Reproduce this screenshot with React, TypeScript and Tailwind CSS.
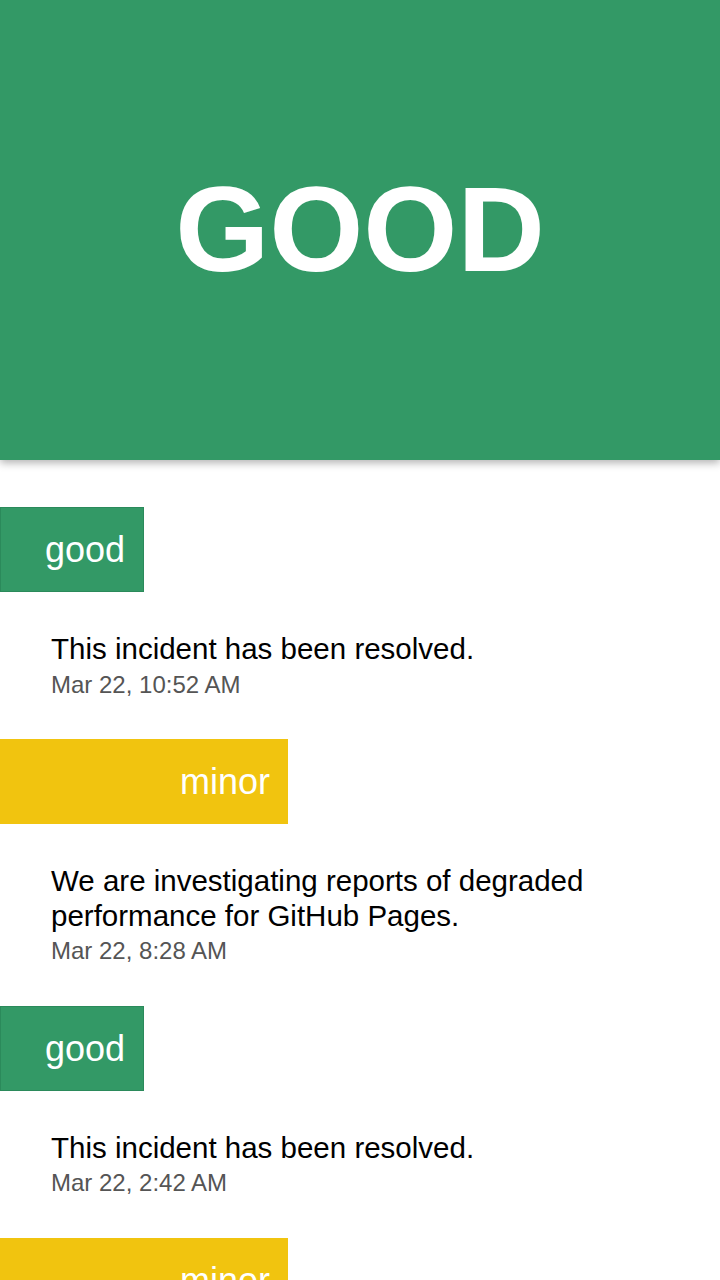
import React from "react";

type Status = "good" | "minor";

interface Incident {
  status: Status;
  body: string;
  date: string;
}

const incidents: Incident[] = [
  { status: "good", body: "This incident has been resolved.", date: "Mar 22, 10:52 AM" },
  {
    status: "minor",
    body: "We are investigating reports of degraded performance for GitHub Pages.",
    date: "Mar 22, 8:28 AM",
  },
  { status: "good", body: "This incident has been resolved.", date: "Mar 22, 2:42 AM" },
  {
    status: "minor",
    body: "We are investigating reports of degraded performance.",
    date: "Mar 22, 1:15 AM",
  },
];

const badgeClass: Record<Status, string> = {
  good: "w-[144px] bg-[#339966] border border-[#2b8a5b]",
  minor: "w-[288px] bg-[#f1c40f]",
};

const StatusBadge: React.FC<{ status: Status }> = ({ status }) => (
  <div
    className={`flex h-[85px] items-center justify-end pr-[18px] text-[36px] leading-[41px] text-white ${badgeClass[status]}`}
  >
    {status}
  </div>
);

const App: React.FC = () => {
  return (
    <div className="min-h-screen bg-white font-['Liberation_Sans',Arial,sans-serif]">
      <header className="relative z-10 flex h-[460px] items-center justify-center bg-[#339966] shadow-[0_3px_8px_rgba(0,0,0,0.3)]">
        <h1 className="text-[121px] font-bold leading-[1.15] text-white">GOOD</h1>
      </header>
      <main className="pt-[47px]">
        {incidents.map((incident, i) => (
          <div key={i} className="pb-[41px]">
            <StatusBadge status={incident.status} />
            <div className="pl-[51px] pr-[40px] pt-[40px]">
              <p className="text-[29.5px] leading-[34.5px] text-black">{incident.body}</p>
              <p className="mt-[4px] text-[24px] leading-[27.6px] text-[#555]">{incident.date}</p>
            </div>
          </div>
        ))}
      </main>
    </div>
  );
};

export default App;
